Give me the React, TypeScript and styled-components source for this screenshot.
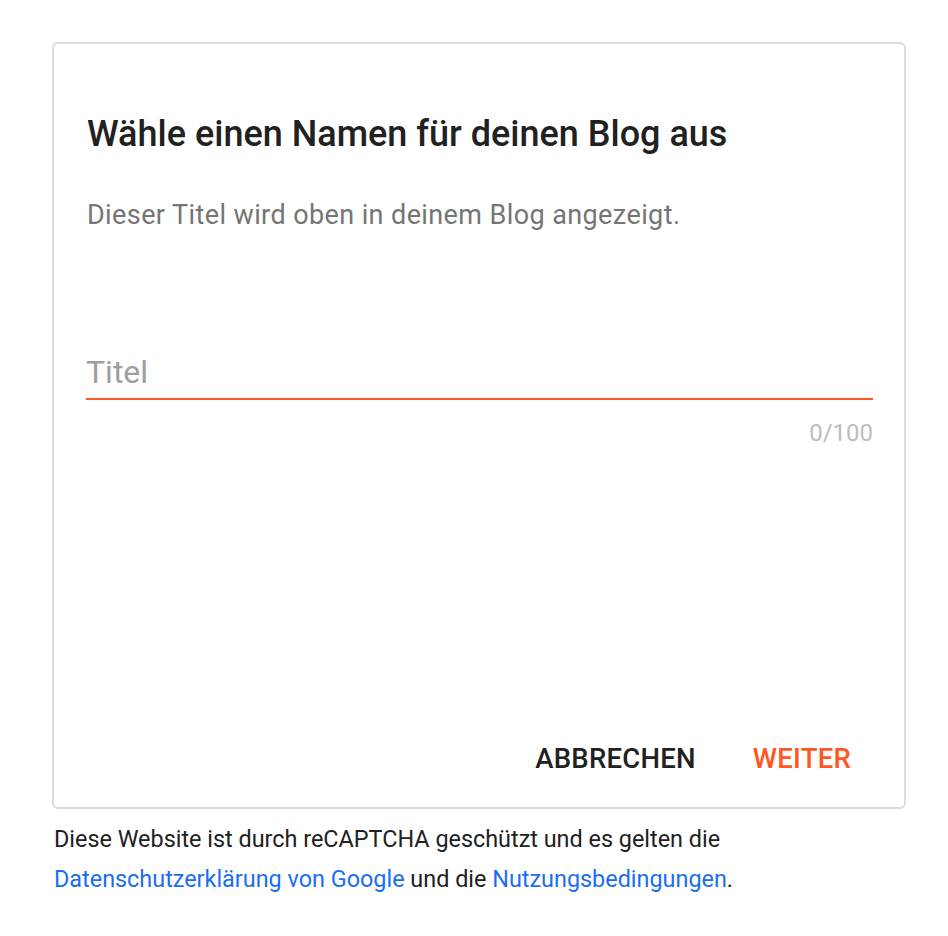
import styled, { createGlobalStyle } from "styled-components";

const Global = createGlobalStyle`
  html, body {
    margin: 0;
    padding: 0;
    background: #ffffff;
    font-family: Roboto, "Liberation Sans", sans-serif;
  }
`;

const Page = styled.div`
  padding: 42px 42px 0 52px;
  width: 854px;
`;

const Card = styled.section`
  box-sizing: border-box;
  height: 767px;
  border: 2px solid #d7dde1;
  border-radius: 6px;
  padding: 0 31px 0 32px;
  display: flex;
  flex-direction: column;
`;

const Title = styled.h1`
  margin: 69px 0 0 1px;
  font-size: 36px;
  line-height: 42px;
  font-weight: 500;
  color: #212121;
`;

const Subtitle = styled.p`
  margin: 44px 0 0 1px;
  font-size: 27px;
  line-height: 32px;
  letter-spacing: 0.4px;
  color: #757575;
`;

const Field = styled.div`
  margin-top: 122px;
  display: flex;
  flex-direction: column;
`;

const Input = styled.input`
  border: none;
  border-bottom: 2px solid #ff5722;
  outline: none;
  padding: 0 0 7px;
  font-family: inherit;
  font-size: 32px;
  line-height: 38px;
  color: #212121;
  background: transparent;
  &::placeholder {
    color: #9e9e9e;
  }
`;

const Counter = styled.span`
  align-self: flex-end;
  margin-top: 19px;
  font-size: 24px;
  line-height: 28px;
  color: #bdbdbd;
`;

const Actions = styled.div`
  margin-top: auto;
  margin-bottom: 32px;
  display: flex;
  justify-content: flex-end;
  gap: 57px;
  padding-right: 22px;
`;

const Button = styled.button<{ $primary?: boolean }>`
  border: none;
  background: none;
  padding: 0;
  font-family: inherit;
  font-size: 27.5px;
  line-height: 32px;
  font-weight: 500;
  letter-spacing: 0.25px;
  color: ${(p) => (p.$primary ? "#ff5722" : "#212121")};
  cursor: pointer;
`;

const Footer = styled.p`
  margin: 10px 0 0 2px;
  font-size: 23.4px;
  line-height: 40px;
  color: #212121;
`;

const Link = styled.a`
  color: #1a6ef0;
  text-decoration: none;
`;

export default function App() {
  return (
    <Page>
      <Global />
      <Card>
        <Title>Wähle einen Namen für deinen Blog aus</Title>
        <Subtitle>Dieser Titel wird oben in deinem Blog angezeigt.</Subtitle>
        <Field>
          <Input placeholder="Titel" />
          <Counter>0/100</Counter>
        </Field>
        <Actions>
          <Button>ABBRECHEN</Button>
          <Button $primary>WEITER</Button>
        </Actions>
      </Card>
      <Footer>
        Diese Website ist durch reCAPTCHA geschützt und es gelten die
        <br />
        <Link href="#">Datenschutzerklärung von Google</Link> und die{" "}
        <Link href="#">Nutzungsbedingungen</Link>.
      </Footer>
    </Page>
  );
}
